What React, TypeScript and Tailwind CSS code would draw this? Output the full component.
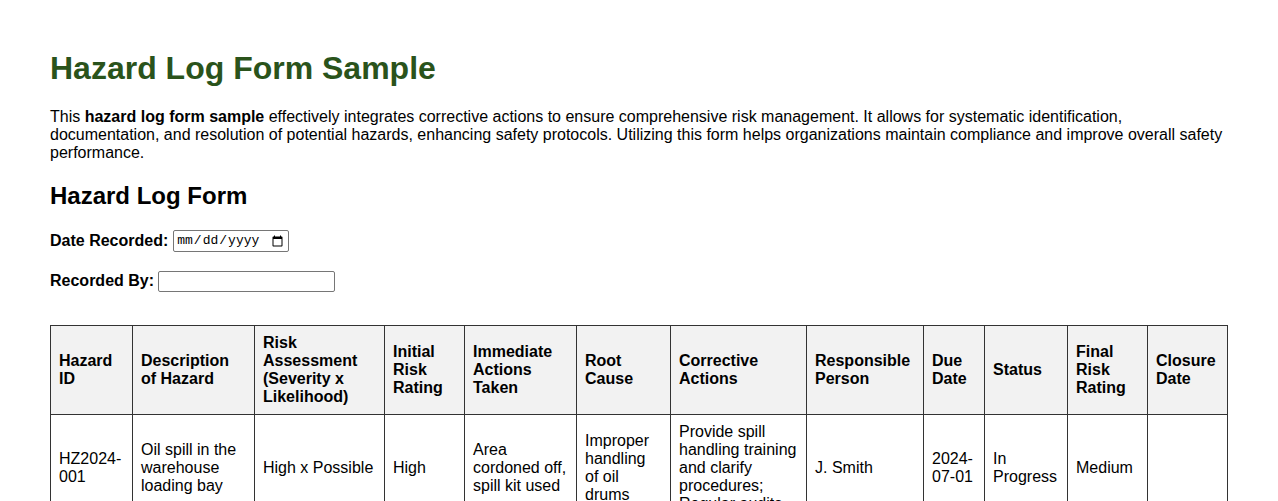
export default function App() {
  const heads = [
    "Hazard ID",
    "Description of Hazard",
    "Risk Assessment (Severity x Likelihood)",
    "Initial Risk Rating",
    "Immediate Actions Taken",
    "Root Cause",
    "Corrective Actions",
    "Responsible Person",
    "Due Date",
    "Status",
    "Final Risk Rating",
    "Closure Date",
  ];
  const widths = [
    "w-[82px]",
    "w-[122px]",
    "w-[130px]",
    "w-[80px]",
    "w-[112px]",
    "w-[94px]",
    "w-[136px]",
    "w-[117px]",
    "w-[61px]",
    "w-[83px]",
    "w-[80px]",
    "w-[80px]",
  ];
  const row = [
    "HZ2024-001",
    "Oil spill in the warehouse loading bay",
    "High x Possible",
    "High",
    "Area cordoned off, spill kit used",
    "Improper handling of oil drums",
    "Provide spill handling training and clarify procedures; Regular audits",
    "J. Smith",
    "2024-07-01",
    "In Progress",
    "Medium",
    "",
  ];

  return (
    <div className="min-h-screen bg-white px-[50px] pt-[50px] pb-10 font-['Liberation_Sans',Arial,sans-serif] text-base leading-normal text-black">
      <h1 className="text-[32px] font-bold leading-[37px] text-[#2a531b]">
        Hazard Log Form Sample
      </h1>
      <p className="mt-[21px] text-base leading-[18px]">
        This <b>hazard log form sample</b> effectively integrates corrective actions to ensure comprehensive risk
        management. It allows for systematic identification, documentation, and resolution of potential hazards,
        enhancing safety protocols. Utilizing this form helps organizations maintain compliance and improve overall
        safety performance.
      </p>
      <h2 className="mt-[20px] text-[24px] font-bold leading-[28px]">Hazard Log Form</h2>

      <form className="mt-[20px]">
        <div className="flex items-center gap-[5px] h-[22px]">
          <label className="font-bold">Date Recorded:</label>
          <input
            type="date"
            className="h-[22px] w-[116px] rounded-[2px] border border-[#767676] px-[2px] font-['Liberation_Mono',monospace] text-[13px]"
          />
        </div>
        <div className="mt-[18px] flex items-center gap-[4px] h-[22px]">
          <label className="font-bold">Recorded By:</label>
          <input
            type="text"
            className="h-[21px] w-[177px] rounded-[2px] border border-[#767676] px-[2px] text-[13px]"
          />
        </div>
      </form>

      <table className="mt-[33px] w-[1178px] table-fixed border-collapse">
        <thead>
          <tr>
            {heads.map((h, i) => (
              <th
                key={h}
                className={`${widths[i]} border border-[#333] bg-[#f2f2f2] p-2 text-left align-middle font-bold leading-[18px]`}
              >
                {h}
              </th>
            ))}
          </tr>
        </thead>
        <tbody>
          <tr>
            {row.map((c, i) => (
              <td key={i} className="border border-[#333] p-2 align-middle leading-[18px]">
                {c}
              </td>
            ))}
          </tr>
        </tbody>
      </table>
    </div>
  );
}
